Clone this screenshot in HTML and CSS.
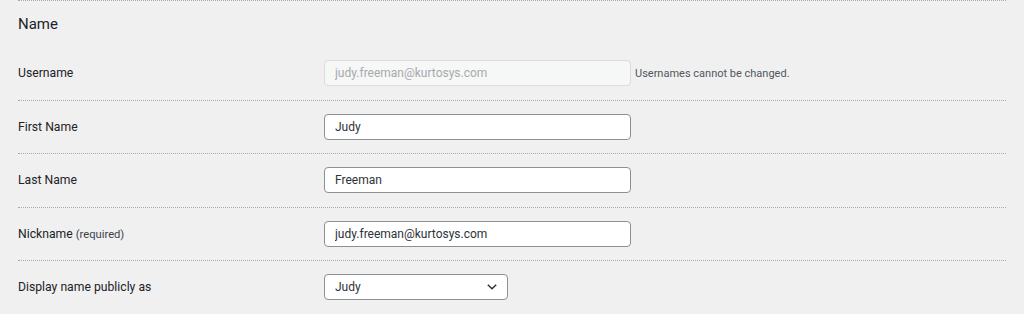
FILE: index.html
```html
<!DOCTYPE html>
<html lang="en">
<head>
    <meta charset="UTF-8">
    <meta name="viewport" content="width=device-width, initial-scale=1.0">
    <title>Profile - Name</title>
    <link rel="stylesheet" href="styles.css">
</head>
<body>
    <div class="profile-section">
        <h2 class="section-title">Name</h2>

        <div class="form-row">
            <label class="row-label" for="user_login">Username</label>
            <div class="row-field">
                <input type="text" id="user_login" class="text-input" value="judy.freeman@kurtosys.com" disabled>
                <span class="description">Usernames cannot be changed.</span>
            </div>
        </div>

        <div class="form-row">
            <label class="row-label" for="first_name">First Name</label>
            <div class="row-field">
                <input type="text" id="first_name" class="text-input" value="Judy">
            </div>
        </div>

        <div class="form-row">
            <label class="row-label" for="last_name">Last Name</label>
            <div class="row-field">
                <input type="text" id="last_name" class="text-input" value="Freeman">
            </div>
        </div>

        <div class="form-row">
            <label class="row-label" for="nickname">Nickname <span class="required">(required)</span></label>
            <div class="row-field">
                <input type="text" id="nickname" class="text-input" value="judy.freeman@kurtosys.com">
            </div>
        </div>

        <div class="form-row">
            <label class="row-label" for="display_name">Display name publicly as</label>
            <div class="row-field">
                <div class="select-wrap">
                    <select id="display_name" class="select-input">
                        <option>Judy</option>
                        <option>Freeman</option>
                        <option>Judy Freeman</option>
                        <option>judy.freeman@kurtosys.com</option>
                    </select>
                    <svg class="select-arrow" width="12" height="8" viewBox="0 0 12 8" aria-hidden="true">
                        <path d="M1.8 1.8 L6 5.8 L10.2 1.8" fill="none" stroke="#2c3338" stroke-width="1.5"/>
                    </svg>
                </div>
            </div>
        </div>
    </div>
</body>
</html>
```

FILE: styles.css
```css
* {
    margin: 0;
    padding: 0;
    box-sizing: border-box;
}

body {
    font-family: Roboto, 'Liberation Sans', Arial, sans-serif;
    background: #f0f0f1;
    color: #1d2327;
    font-size: 12px;
}

.profile-section {
    margin-left: 18px;
    width: 988px;
    border-top: 1px dotted #a7aaad;
}

.section-title {
    font-size: 15px;
    font-weight: 400;
    color: #1d2327;
    height: 46px;
    padding-top: 14px;
}

.form-row {
    display: flex;
    align-items: center;
    height: 53.5px;
    border-bottom: 1px dotted #a7aaad;
}

.row-label {
    width: 306px;
    font-weight: 400;
    font-size: 12.2px;
    color: #1d2327;
}

.required {
    font-size: 11.2px;
    color: #3c434a;
}

.row-field {
    display: flex;
    align-items: center;
    gap: 4px;
}

.text-input,
.select-input {
    font-family: inherit;
    font-size: 12px;
    height: 26px;
    border: 1px solid #8c8f94;
    border-radius: 4px;
    background: #fff;
    color: #2c3338;
    padding: 0 10px;
}

.text-input {
    width: 307px;
}

.text-input:disabled {
    background: #f6f7f7;
    border-color: #dcdcde;
    color: #a7aaad;
}

.description {
    font-size: 11px;
    color: #50575e;
}

.select-wrap {
    position: relative;
}

.select-input {
    width: 184px;
    appearance: none;
    -webkit-appearance: none;
}

.select-arrow {
    position: absolute;
    right: 10px;
    top: 9px;
    pointer-events: none;
}
```
